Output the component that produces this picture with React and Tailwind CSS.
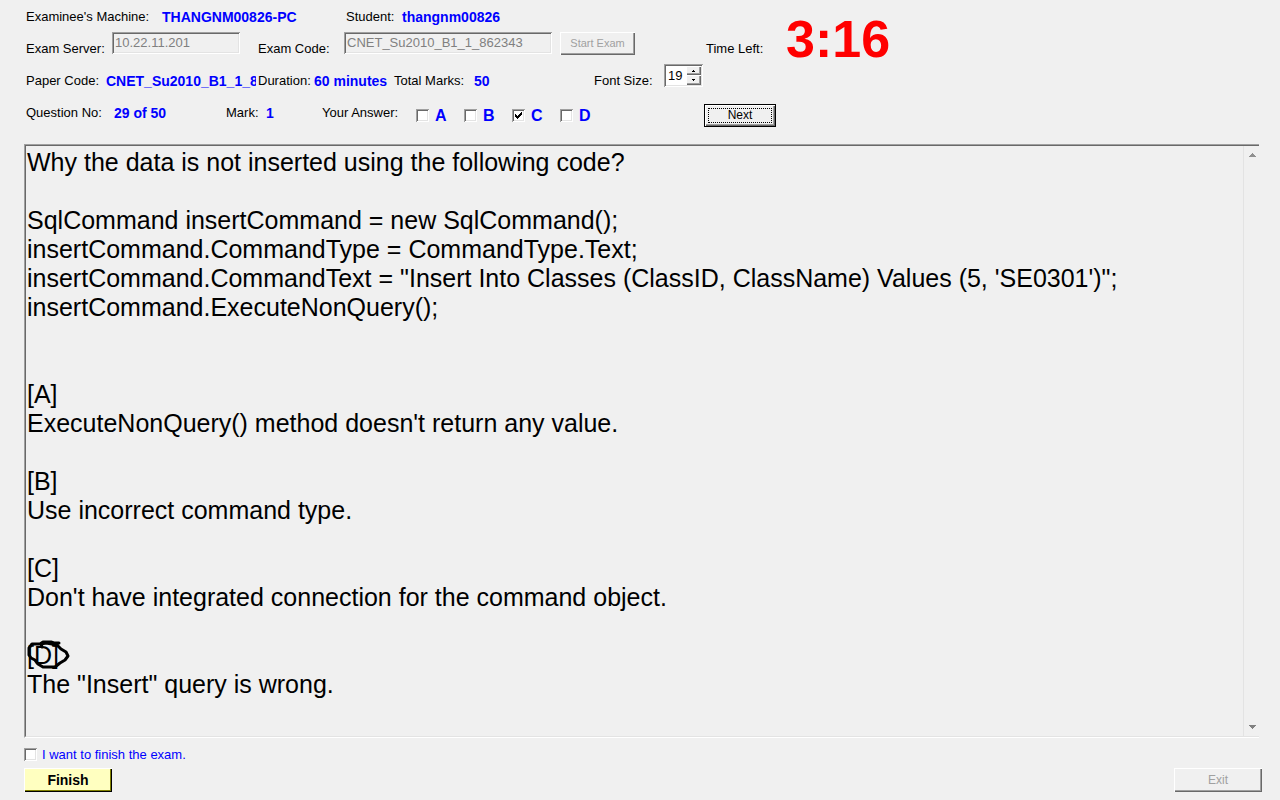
import { useState } from "react";

const QUESTION = `Why the data is not inserted using the following code?

SqlCommand insertCommand = new SqlCommand();
insertCommand.CommandType = CommandType.Text;
insertCommand.CommandText = "Insert Into Classes (ClassID, ClassName) Values (5, 'SE0301')";
insertCommand.ExecuteNonQuery();


[A]
ExecuteNonQuery() method doesn't return any value.

[B]
Use incorrect command type.

[C]
Don't have integrated connection for the command object.

[D]
The "Insert" query is wrong.`;

const SUNKEN =
  "shadow-[inset_1px_1px_0_#a0a0a0,inset_-1px_-1px_0_#ffffff,inset_2px_2px_0_#696969,inset_-2px_-2px_0_#e3e3e3]";
const RAISED =
  "shadow-[inset_1px_1px_0_#ffffff,inset_-1px_-1px_0_#696969,inset_-2px_-2px_0_#a0a0a0]";

function Value({ children, className = "" }) {
  return <span className={`text-[14px] font-bold text-[#0000ff] ${className}`}>{children}</span>;
}

function CheckBox({ id, checked, onChange }) {
  return (
    <span className="grid h-[13px] w-[13px] shrink-0 place-items-center">
      <input
        id={id}
        type="checkbox"
        checked={checked}
        onChange={onChange}
        className={`col-start-1 row-start-1 h-[13px] w-[13px] appearance-none bg-white ${SUNKEN}`}
      />
      {checked && (
        <svg viewBox="0 0 7 7" className="pointer-events-none col-start-1 row-start-1 h-[7px] w-[7px]" shapeRendering="crispEdges">
          <path d="M0 2h1v1h1v1h1v-1h1v-1h1v-1h1v-1h1v3h-1v1h-1v1h-1v1h-1v1h-1v-1h-1v-1h-1z" fill="#000" />
        </svg>
      )}
    </span>
  );
}

export default function App() {
  const [answers, setAnswers] = useState({ A: false, B: false, C: true, D: false });
  const [finish, setFinish] = useState(false);
  const [size, setSize] = useState(19);

  return (
    <main className="flex min-h-screen flex-col bg-[#f0f0f0] pb-2 font-['Liberation_Sans',Arial,sans-serif] text-[13px] text-black">
      <header className="flex flex-col whitespace-nowrap pl-[26px] leading-[34px]">
        <div className="flex h-24">
          <div className="flex w-[680px] flex-col">
            <div className="flex h-8">
              <span className="w-[136px]">Examinee's Machine:</span>
              <Value className="w-[184px]">THANGNM00826-PC</Value>
              <span className="w-14">Student:</span>
              <Value>thangnm00826</Value>
            </div>
            <div className="flex h-8 items-start">
              <label htmlFor="server" className="w-[86px]">Exam Server:</label>
              <input id="server" disabled defaultValue="10.22.11.201" className={`mr-[18px] h-[22px] w-32 px-[3px] text-[13px] text-[#808080] ${SUNKEN}`} />
              <label htmlFor="code" className="w-[86px]">Exam Code:</label>
              <input id="code" disabled defaultValue="CNET_Su2010_B1_1_862343" className={`mr-2 h-[22px] w-52 px-[3px] text-[13px] text-[#808080] ${SUNKEN}`} />
              <button disabled className={`h-[23px] w-[75px] text-[11px] leading-[23px] text-[#a0a0a0] ${RAISED}`}>Start Exam</button>
            </div>
            <div className="flex h-8 items-start">
              <span className="w-20">Paper Code:</span>
              <Value className="w-[150px] overflow-hidden">CNET_Su2010_B1_1_862343</Value>
              <span className="ml-0.5 w-14">Duration:</span>
              <Value className="w-20">60 minutes</Value>
              <span className="w-20">Total Marks:</span>
              <Value className="w-[120px]">50</Value>
              <label htmlFor="size" className="w-[70px]">Font Size:</label>
              <span className={`flex h-[23px] w-[39px] bg-white p-0.5 ${SUNKEN}`}>
                <input id="size" value={size} onChange={(e) => setSize(Number(e.target.value) || 0)} className="w-5 pl-0.5 text-[13px] outline-none" />
                <span className="flex w-[15px] flex-col bg-[#f0f0f0]">
                  <button aria-label="Increase" onClick={() => setSize(size + 1)} className={`grid h-[9px] place-items-center ${RAISED}`}>
                    <svg viewBox="0 0 3 2" className="h-0.5 w-[3px]" shapeRendering="crispEdges"><path d="M1 0h1v1h1v1H0V1h1z" /></svg>
                  </button>
                  <button aria-label="Decrease" onClick={() => setSize(size - 1)} className={`grid h-[10px] place-items-center ${RAISED}`}>
                    <svg viewBox="0 0 3 2" className="h-0.5 w-[3px]" shapeRendering="crispEdges"><path d="M0 0h3v1H2v1H1V1H0z" /></svg>
                  </button>
                </span>
              </span>
            </div>
          </div>
          <span className="mt-8 w-20">Time Left:</span>
          <strong className="text-[52px] leading-[78px] font-bold text-[#ff0000]">3:16</strong>
        </div>
        <div className="flex h-8 items-start">
          <span className="w-[88px]">Question No:</span>
          <Value className="w-28">29 of 50</Value>
          <span className="w-10">Mark:</span>
          <Value className="w-14">1</Value>
          <span className="w-[94px]">Your Answer:</span>
          <div className="flex w-[288px] pt-[3px] leading-[33px]">
            {["A", "B", "C", "D"].map((k) => (
              <div key={k} className="flex w-12 items-center gap-1.5">
                <CheckBox id={`answer-${k}`} checked={answers[k]} onChange={() => setAnswers({ ...answers, [k]: !answers[k] })} />
                <label htmlFor={`answer-${k}`} className="text-[16px] font-bold text-[#0000ff]">{k}</label>
              </div>
            ))}
          </div>
          <button className={`mt-2 h-[23px] w-[72px] border border-black p-[3px] text-[12px] leading-[13px] ${RAISED}`}>
            <span className="block border border-dotted border-black">Next</span>
          </button>
        </div>
      </header>

      <section className="relative mt-4 mr-[21px] ml-6 flex flex-1 border-t border-b border-l border-t-[#a0a0a0] border-b-white border-l-[#a0a0a0]">
        <div className="flex flex-1 border-t border-b border-l border-t-[#696969] border-b-[#e3e3e3] border-l-[#696969]">
          <textarea
            readOnly
            aria-label="Question"
            defaultValue={QUESTION}
            rows={20}
            className="flex-1 resize-none overflow-hidden bg-transparent pt-0.5 pl-px text-[25px] leading-[29px] outline-none"
          />
          <div className="flex w-4 flex-col items-end justify-between border-l border-[#e3e3e3] bg-[#f0f0f0] py-[7px] pr-[3px]">
            <svg viewBox="0 0 7 4" className="h-1 w-[7px]"><path d="M3 0h1v1h1v1h1v1h1v1H0V3h1V2h1V1h1z" fill="#909090" /></svg>
            <svg viewBox="0 0 7 4" className="h-1 w-[7px]"><path d="M0 0h7v1H6v1H5v1H4v1H3V3H2V2H1V1H0z" fill="#808080" /></svg>
          </div>
        </div>
        <svg viewBox="0 0 44 32" className="pointer-events-none absolute top-[494px] left-0.5 h-8 w-11" fill="none" stroke="#000" strokeWidth="3" strokeLinecap="round" strokeLinejoin="round">
          <path d="M32 4L27 4L24 3L16 3L13 5L5 5L2 9L2 16L4 19L8 21L11 25L16 28L28 28L33 24L38 21L41 17L39 13L34 10L31 7L25 5L19 4L14 5L15 8" />
        </svg>
      </section>

      <footer className="flex flex-col pr-[18px] pl-6">
        <div className="flex h-[30px] items-center gap-[5px] pt-[3px]">
          <CheckBox id="finish" checked={finish} onChange={() => setFinish(!finish)} />
          <label htmlFor="finish" className="text-[#0000ff]">I want to finish the exam.</label>
        </div>
        <div className="flex justify-between">
          <button className="h-6 w-[88px] bg-[#ffffc0] text-[14px] font-bold shadow-[inset_1px_1px_0_#ffffff,inset_-1px_-1px_0_#000000,inset_-2px_-2px_0_#808000]">Finish</button>
          <button disabled className={`h-6 w-[88px] text-[12px] text-[#a0a0a0] ${RAISED}`}>Exit</button>
        </div>
      </footer>
    </main>
  );
}
